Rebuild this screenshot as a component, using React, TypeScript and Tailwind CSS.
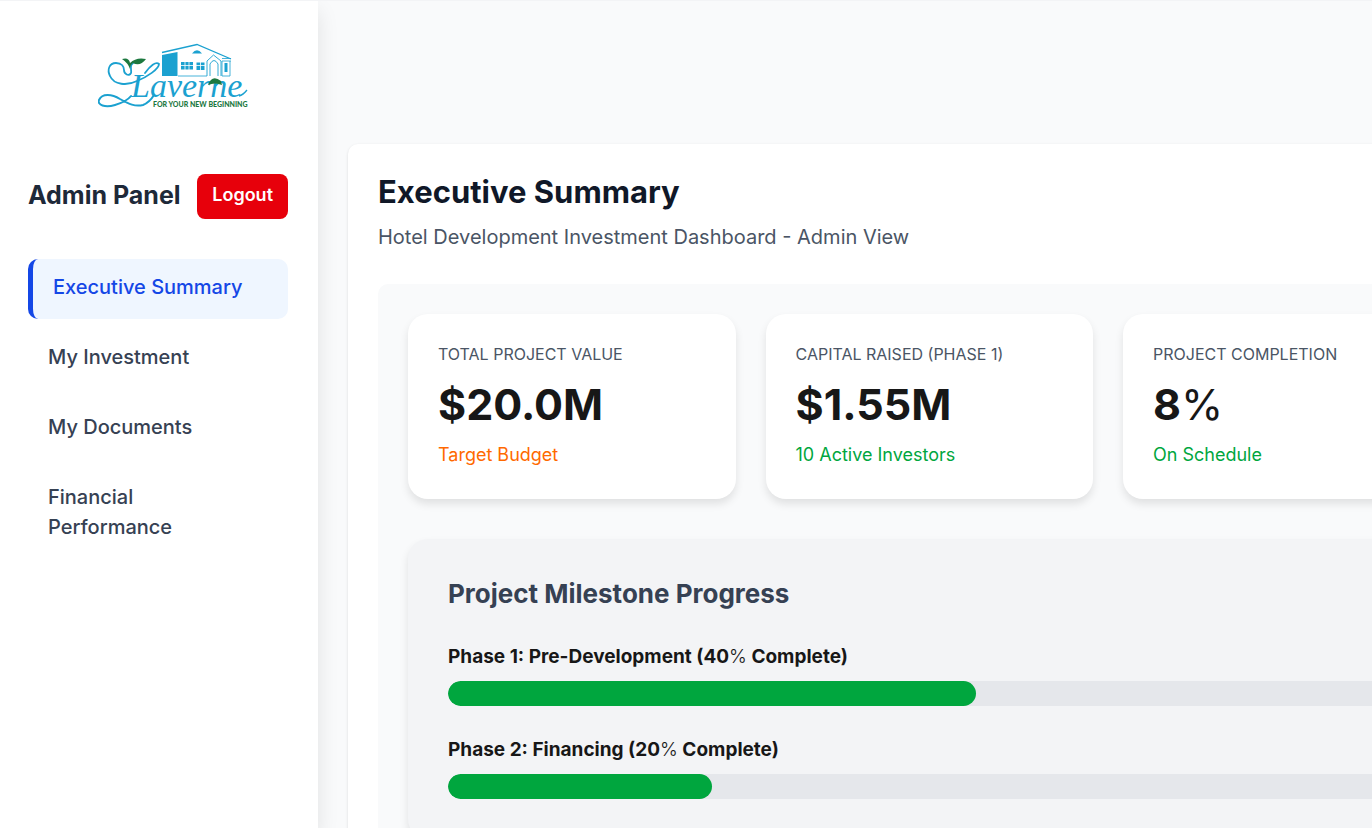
const navItems = ["Executive Summary", "My Investment", "My Documents", "Financial Performance"];

const stats = [
  { label: "TOTAL PROJECT VALUE", value: "$20.0M", unit: "", note: "Target Budget", tone: "text-[#ff6900]" },
  { label: "CAPITAL RAISED (PHASE 1)", value: "$1.55M", unit: "", note: "10 Active Investors", tone: "text-[#00a63e]" },
  { label: "PROJECT COMPLETION", value: "8", unit: "%", note: "On Schedule", tone: "text-[#00a63e]" },
];

const phases = [
  { name: "Phase 1: Pre-Development", percent: 40 },
  { name: "Phase 2: Financing", percent: 20 },
];

function Logo() {
  return (
    <svg width="150" height="66" viewBox="0 0 150 66" role="img" aria-label="Laverne">
      {/* house */}
      <path d="M64 9.500 99 1.500 133 16" fill="none" stroke="#1ba1d0" strokeWidth="1.300" />
      <path d="M64 12 79.500 9V33H64Z" fill="#1ba1d0" />
      <path d="M80 33H109M133 15.500H124M133 18H124V33H132V18" fill="none" stroke="#1ba1d0" strokeWidth="0.800" />
      <path d="M94 10.500Q99 4 104 10.500Z" fill="#1ba1d0" />
      <path d="M83 19h12v7.500H83ZM98.500 19.500h8v7.500h-8Z" fill="#1ba1d0" />
      <path d="M87 19v8M91 19v8M83 22.500h24M102.500 19v8" stroke="#fff" strokeWidth="0.800" />
      <path d="M109 33V18L115.500 12 123 18V33M112 33V21Q116 14 120 21V33" fill="none" stroke="#1ba1d0" strokeWidth="0.900" />
      <path d="M126.500 20h3v9h-3Z" fill="#1ba1d0" />
      {/* sprig and swirls around the wordmark */}
      <path d="M38 19C30 21 34 26 33 30C31 34 26 31 26 27C26 24 24 20 18 20C11 20 9 27 12 33C16 42 29 43 39 38C49 34 61 26 61 21C58 18 52 23 47 30" fill="none" stroke="#1ba1d0" strokeWidth="1.800" strokeLinecap="round" />
      <path d="M33 53C29 58 24 60 17 62C7 65-1 62 1 57C4 50 14 51 22 56C31 61 37 64 45 62C50 60 53 57 56 52" fill="none" stroke="#1ba1d0" strokeWidth="2" strokeLinecap="round" />
      <path d="M32 20Q38 14 48 16Q42 24 35 20Q32 22 32 26Q30 20 24 16Q31 14 32 20Z" fill="#1c783f" />
      <text x="33" y="54" fontFamily="'Liberation Serif', serif" fontStyle="italic" fontSize="34" fill="#1ba1d0">Laverne</text>
      <path d="M110 42Q114 31 123 38L124 42Q117 39 110 42Z" fill="#1c783f" />
      <path d="M141 53Q145 52 149 47" fill="none" stroke="#1ba1d0" strokeWidth="1.300" />
      <text x="55" y="64" fontFamily="Lato, sans-serif" fontWeight="900" fontSize="7" fill="#1c783f">FOR YOUR NEW BEGINNING</text>
    </svg>
  );
}

function Sidebar() {
  return (
    <aside className="z-10 flex w-[318px] shrink-0 flex-col bg-white pr-[30px] pl-7 shadow-[0_10px_20px_rgba(0,0,0,0.1)]">
      <div className="flex h-[173px] justify-center pt-[42px] pl-[30px]">
        <Logo />
      </div>
      <div className="flex items-center justify-between">
        <h2 className="pb-1 text-[25px] leading-9 font-bold whitespace-nowrap text-[#1e2939]">Admin Panel</h2>
        <button type="button" className="h-[45px] rounded-lg bg-[#e7000b] px-[15px] pb-1 text-lg font-semibold text-white">
          Logout
        </button>
      </div>
      <nav className="mt-10 flex flex-col gap-[10px]">
        {navItems.map((item, i) => (
          <a
            key={item}
            href="#"
            aria-current={i === 0 ? "page" : undefined}
            className={
              i === 0
                ? "rounded-[10px] border-l-[5px] border-[#1447e6] bg-[#eff6ff] px-5 pt-[13px] pb-[17px] text-xl leading-[30px] font-medium text-[#1447e6]"
                : "rounded-[10px] pt-[13px] pr-[70px] pb-[17px] pl-5 text-xl leading-[30px] font-medium text-[#364153]"
            }
          >
            {item}
          </a>
        ))}
      </nav>
    </aside>
  );
}

export default function App() {
  return (
    <div className="flex h-screen overflow-hidden border-t border-[#f3f4f6] bg-[#f9fafb] font-['Inter',sans-serif] text-[#171717]">
      <Sidebar />
      <main className="min-w-0 flex-1 overflow-auto px-[30px] pt-[143px] [scrollbar-width:none]">
        <section className="min-w-[1520px] rounded-[10px] bg-white p-[30px] shadow-[0_1px_3px_rgba(0,0,0,0.12)]">
          <h1 className="text-[31px] leading-9 font-bold text-[#101828]">Executive Summary</h1>
          <p className="mt-3 text-xl leading-[30px] text-[#4a5565]">Hotel Development Investment Dashboard - Admin View</p>
          <div className="mt-8 rounded-[10px] bg-[#f9fafb] p-[30px]">
            <div className="grid grid-cols-4 gap-[30px]">
              {stats.map((s) => (
                <article key={s.label} className="rounded-[20px] bg-white px-[30px] pt-7 pb-8 shadow-[0_5px_8px_rgba(0,0,0,0.1)]">
                  <h3 className="text-base leading-[25px] text-[#4a5565]">{s.label}</h3>
                  <p className="my-[10px] text-[43px] leading-[55px] font-bold">
                    {s.value}
                    <span className="font-normal">{s.unit}</span>
                  </p>
                  <p className={`text-lg leading-[25px] ${s.tone}`}>{s.note}</p>
                </article>
              ))}
            </div>
            <section className="mt-10 rounded-[20px] bg-[#f3f4f6] p-10 shadow-[0_5px_8px_rgba(0,0,0,0.1)]">
              <h2 className="text-[26px] leading-[30px] font-bold text-[#364153]">Project Milestone Progress</h2>
              <ul className="mt-[34px] flex flex-col gap-[30px]">
                {phases.map((p) => (
                  <li key={p.name}>
                    <p className="text-[19px] leading-7 font-bold">
                      {p.name} ({p.percent}
                      <span className="font-light">%</span> Complete)
                    </p>
                    <div className="mt-[10px] h-[25px] overflow-hidden rounded-full bg-[#e5e7eb]">
                      <div className="h-full rounded-full bg-[#00a63e]" style={{ width: `${p.percent}%` }} />
                    </div>
                  </li>
                ))}
              </ul>
            </section>
          </div>
        </section>
      </main>
    </div>
  );
}
